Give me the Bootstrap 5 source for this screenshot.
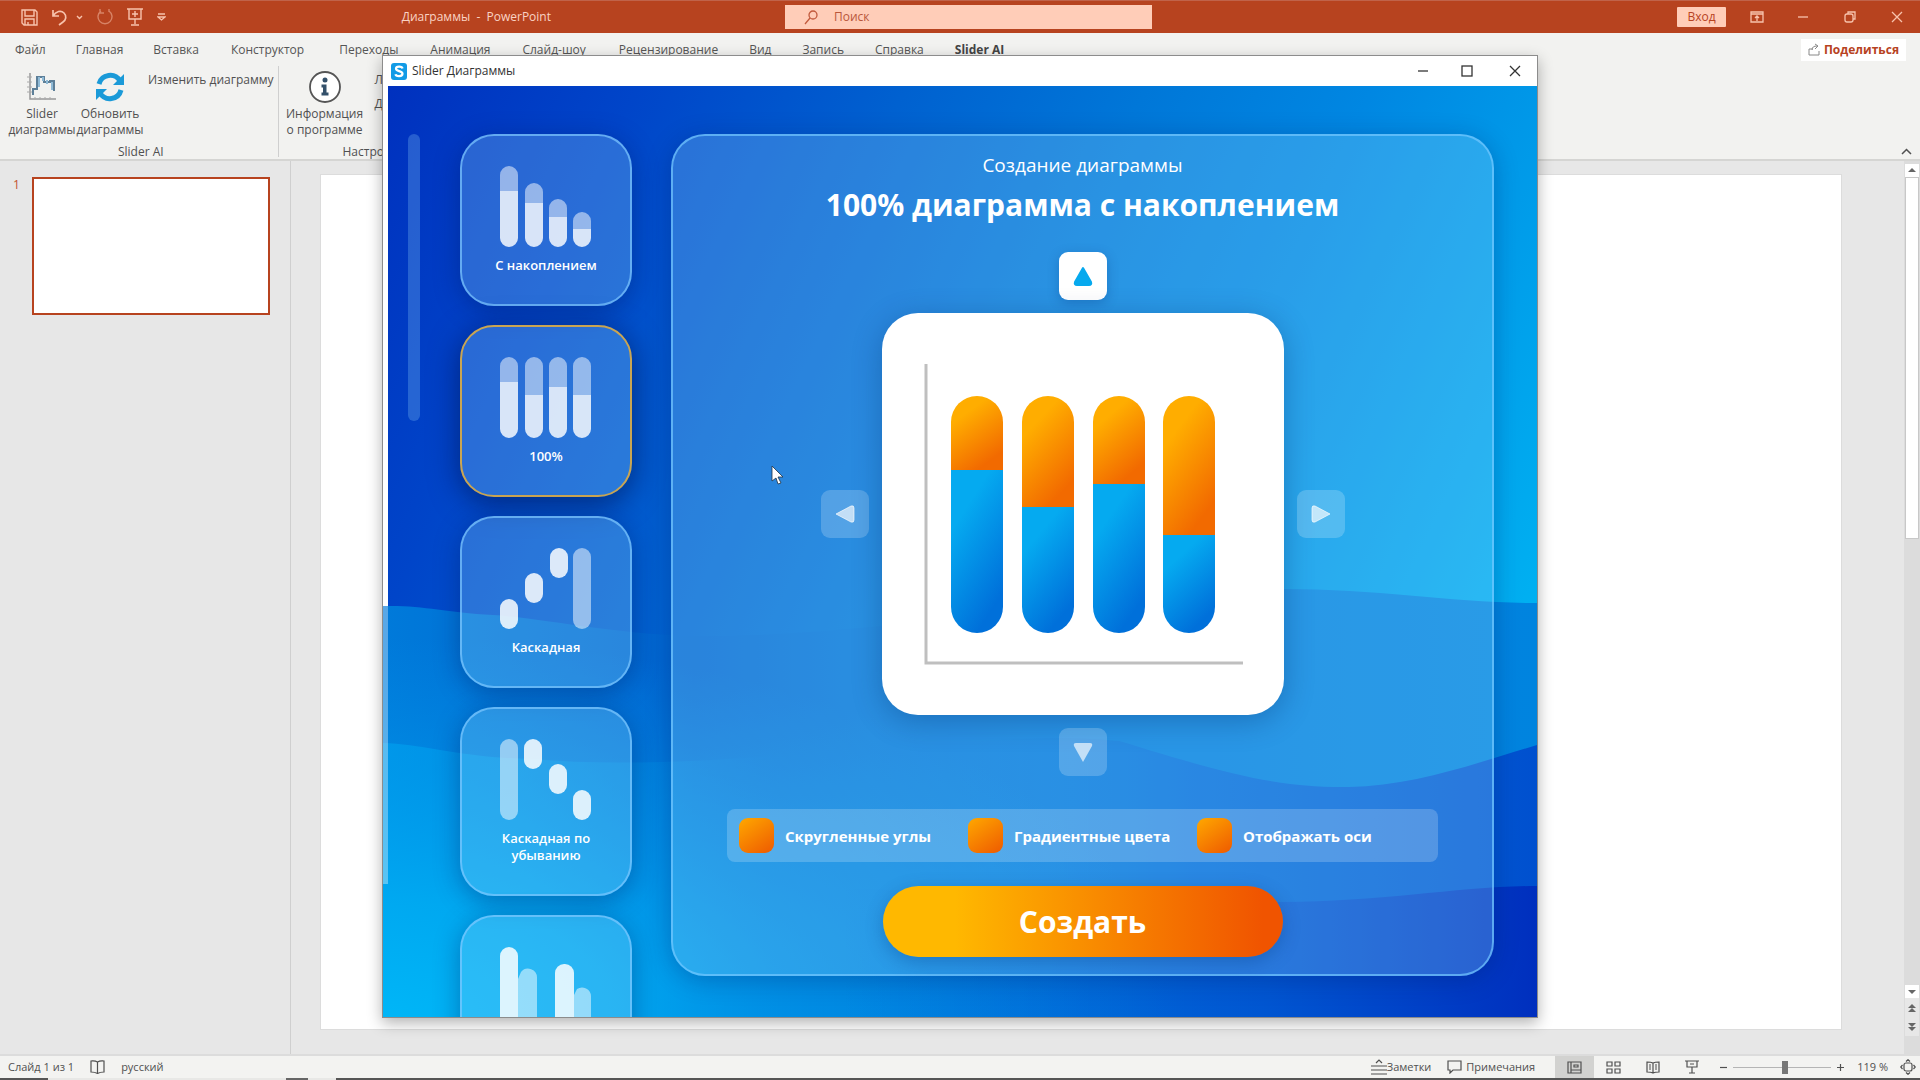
<!DOCTYPE html>
<html lang="ru">
<head>
<meta charset="utf-8">
<meta name="viewport" content="width=device-width, initial-scale=1">
<title>Диаграммы - PowerPoint</title>
<link rel="stylesheet" href="https://cdn.jsdelivr.net/npm/bootstrap@5.3.0/dist/css/bootstrap.min.css">
<style>
  body { font-family: "Open Sans", "Noto Sans", sans-serif; font-size: 12px; line-height: 16px; color: #505050; background: #e7e7e7; overflow: hidden; }
  button { font: inherit; color: inherit; background: none; border: 0; padding: 0; }
  svg { display: block; flex: none; }
  .ln { fill: none; stroke: currentColor; }
  .titlebar { height: 33px; background: #b7431f; color: #f8c3ad; border-top: 1px solid #c0634a; }
  .side-left { flex: 785 1 0; }
  .side-right { flex: 753 1 0; }
  .quick { gap: 14px; padding-left: 21px; }
  .doc-name { padding-right: 234px; color: #fad3c4; }
  .search-box { width: 367px; height: 24px; background: #ffcdb8; padding-left: 19px; gap: 16px; color: #c25a3c; }
  .search-box input { border: 0; background: none; color: #b9573b; outline: 0; padding: 0; }
  .search-box input::placeholder { color: #b9573b; opacity: 1; }
  .sign-in { width: 49px; height: 20px; background: #ffcdb8; color: #b7431f; border-radius: 1px; margin-right: -7px; }
  .win-tools { gap: 31px; padding-right: 15px; }
  .ribbon { height: 128px; background: #f2f2f0; border-bottom: 2px solid #d5d5d3; }
  .tabs-row { height: 33px; }
  .tabs-row a { color: #555; text-decoration: none; padding: 0 16px; }
  .tabs-row a:nth-child(-n+3) { padding: 0 15px; }
  .tabs-row a:nth-child(4) { padding: 0 19px 0 17px; }
  .tabs-row a:nth-child(n+8) { padding: 0 14px 0 17px; }
  .tabs-row a.current { font-weight: 700; color: #444; }
  .share-btn { background: #fff; color: #b7431f; font-weight: 700; height: 22px; padding: 0 7px; gap: 4px; margin-right: 14px; }
  .groups { flex: 1; }
  .tool-group { padding: 2px 4px 0 8px; border-right: 1px solid #cfcfcf; height: 91px; }
  .tool { display: flex; flex-direction: column; align-items: center; width: 68px; height: 76px; text-align: center; white-space: nowrap; }
  .tool.wide { width: 76px; margin-right: 12px; }
  .tool-pic { height: 38px; display: flex; align-items: center; }
  .workspace { flex: 1; min-height: 0; }
  .thumbs { width: 291px; border-right: 1px solid #cfcfcf; padding: 16px 0 0 13px; gap: 12px; color: #c2532f; }
  .thumb-slide { width: 238px; height: 138px; background: #fff; border: 2px solid #b7431f; }
  .canvas-area { padding: 13px 62px 26px 29px; }
  .slide-page { background: #fff; border: 1px solid #dcdcdc; }
  .vscroll { width: 16px; padding: 3px 1px 20px; background: #dcdcdc; }
  .vscroll button { background: #fff; height: 13px; display: flex; align-items: center; justify-content: center; }
  .vscroll-thumb { background: #fff; height: 362px; border: 1px solid #c8c8c8; }
  .vscroll .plain { background: #e7e7e7; height: 19px; }
  .statusbar { height: 22px; background: #f3f3f1; box-shadow: 0 -2px 0 #dcdcdc; font-size: 11px; }
  .bottom-edge { height: 2px; background: linear-gradient(90deg, #555 48px, #e8e8e6 48px 286px, #666 286px 308px, #e8e8e6 308px 336px, #555 336px); }
  .view-btn { width: 39px; height: 22px; display: flex; align-items: center; justify-content: center; }
  .view-btn.on { background: #d2d2d0; }
  .zoom-range { appearance: none; width: 98px; height: 14px; background: linear-gradient(#b5b5b5, #b5b5b5) center / 100% 1px no-repeat; margin: 0 5px; }
  .zoom-range::-webkit-slider-thumb { appearance: none; width: 6px; height: 13px; background: #777; border: 0; }

  .dialog-win { position: absolute; inset: 55px 382px 62px 382px; border: 1px solid #8c8c8c; box-shadow: 0 5px 14px rgba(0,0,0,.3); background: #fff; color: #333; }
  .dialog-bar { height: 30px; padding: 0 16px 0 8px; gap: 5px; }
  .dialog-body { flex: 1; min-height: 0; position: relative; overflow: hidden; padding: 0 46px 0 25px; color: #fff; }
  .waves { position: absolute; inset: 0; width: 100%; height: 100%; }
  .side-scroll { width: 12px; height: 287px; border-radius: 6px; background: rgba(160,225,255,.24); margin: 48px 40px 0 0; position: relative; }
  .kind-list { width: 172px; gap: 19px; padding-top: 48px; position: relative; }
  .kind { flex: none; min-height: 172px; padding: 30px 20px; gap: 10px; display: flex; flex-direction: column; align-items: center; border: 2px solid rgba(125,200,255,.7); border-radius: 34px; background: rgba(160,225,255,.26); box-shadow: 0 5px 26px rgba(0,20,90,.36); font-size: 13px; line-height: 17px; font-weight: 600; }
  .kind.picked { border-color: #c9a552; box-shadow: 0 6px 30px rgba(0,10,60,.55); }
  .maker { margin: 48px 0 41px 39px; padding: 17px 54px 17px; border: 2px solid rgba(115,200,255,.7); border-radius: 34px; background: rgba(160,225,255,.26); box-shadow: 0 4px 24px rgba(0,20,90,.28); position: relative; }
  .maker h2 { font-size: 19px; line-height: 24px; font-weight: 500; margin: 0; }
  .maker h1 { font-size: 30px; line-height: 48px; font-weight: 700; margin: 4px 0 0; }
  .arrow-btn { width: 48px; height: 48px; border-radius: 9px; background: rgba(255,255,255,.2); color: rgba(255,255,255,.65); display: flex; align-items: center; justify-content: center; }
  .arrow-btn.on { background: #fff; color: #06a9ee; box-shadow: 0 3px 12px rgba(0,40,110,.25); margin-top: 23px; }
  .preview-row { gap: 13px; margin: 13px 0; }
  .preview { width: 402px; height: 402px; background: #fff; border-radius: 36px; box-shadow: 0 6px 30px rgba(0,40,100,.32); }
  .option-bar { height: 53px; border-radius: 8px; background: rgba(255,255,255,.2); padding: 0 12px; font-size: 15px; line-height: 20px; font-weight: 700; }
  .opt { width: 229px; gap: 11px; white-space: nowrap; }
  .opt input { appearance: none; width: 35px; height: 35px; margin: 0; border-radius: 9px; background: linear-gradient(145deg, #ffa800, #ee5a00); }
  .create-btn { width: 400px; height: 71px; border-radius: 36px; background: linear-gradient(90deg, #ffb800 18%, #f05400 95%); color: #fff; font-size: 30px; line-height: 40px; font-weight: 700; box-shadow: 0 5px 18px rgba(0,50,120,.3); }
  .pointer { position: absolute; left: 771px; top: 465px; }
</style>
<script src="https://cdn.jsdelivr.net/npm/bootstrap@5.3.0/dist/js/bootstrap.bundle.min.js"></script>
</head>
<body class="d-flex flex-column vh-100 position-relative">

<header class="titlebar d-flex align-items-center flex-shrink-0">
  <div class="side-left d-flex align-items-center justify-content-between">
    <div class="quick d-flex align-items-center">
      <button aria-label="Сохранить"><svg width="17" height="17" viewBox="0 0 17 17" class="ln" stroke-width="1.4"><path d="M1 1h13l2 2v13H3l-2-2zM4 1v6h9V1M4 16v-6h9v6M7 16v-3"/></svg></button>
      <button class="d-flex align-items-center gap-2" aria-label="Отменить"><svg width="16" height="17" viewBox="0 0 16 17" class="ln" stroke-width="1.7"><path d="M1 1v6h6M1 7c3-5 8-6 11-3s2 7-1 9l-4 3"/></svg><svg width="7" height="5" viewBox="0 0 7 5" class="ln" stroke-width="1.4"><path d="M1 1l2.500 2.500L6 1"/></svg></button>
      <button class="opacity-50" aria-label="Повторить"><svg width="16" height="18" viewBox="0 0 16 18" class="ln" stroke-width="1.4"><path d="M4 3a7 7 0 1 0 8 0M3 1v4h4M12 1v3"/></svg></button>
      <button aria-label="С начала"><svg width="16" height="18" viewBox="0 0 16 18" class="ln" stroke-width="1.4"><path d="M0 1h16M2 1v10h12V1M8 11v5M4 17h8M8 3v6M5 6h6"/></svg></button>
      <button aria-label="Настройка панели"><svg width="9" height="9" viewBox="0 0 9 9" class="ln" stroke-width="1.3"><path d="M1 1h7M1 4h7L4.500 7z"/></svg></button>
    </div>
    <div class="doc-name">Диаграммы&nbsp; - &nbsp;PowerPoint</div>
  </div>
  <label class="search-box d-flex align-items-center">
    <svg width="14" height="15" viewBox="0 0 14 15" class="ln" stroke-width="1.3"><circle cx="9" cy="5" r="4"/><path d="M6 8l-5 6"/></svg>
    <input type="search" placeholder="Поиск" aria-label="Поиск">
  </label>
  <div class="side-right win-tools d-flex align-items-center justify-content-end">
    <button class="sign-in">Вход</button>
    <button aria-label="Параметры ленты"><svg width="14" height="12" viewBox="0 0 14 12" class="ln" stroke-width="1.3"><path d="M1 1h12v10H1zM1 3h12M7 10V5M5 7l2-2 2 2"/></svg></button>
    <button aria-label="Свернуть"><svg width="16" height="12" viewBox="0 0 16 12" class="ln" stroke-width="1.3"><path d="M3 6h10"/></svg></button>
    <button aria-label="Восстановить"><svg width="16" height="12" viewBox="0 0 16 12" class="ln" stroke-width="1.3"><rect x="3" y="3" width="8" height="8" rx="2"/><path d="M6 3V1h7v7h-2"/></svg></button>
    <button aria-label="Закрыть"><svg width="16" height="12" viewBox="0 0 16 12" class="ln" stroke-width="1.3"><path d="M3 1l10 10M13 1L3 11"/></svg></button>
  </div>
</header>

<section class="ribbon d-flex flex-column flex-shrink-0">
  <div class="tabs-row d-flex align-items-center justify-content-between">
    <nav class="d-flex">
      <a href="#">Файл</a><a href="#">Главная</a><a href="#">Вставка</a><a href="#">Конструктор</a><a href="#">Переходы</a><a href="#">Анимация</a><a href="#">Слайд-шоу</a><a href="#">Рецензирование</a><a href="#">Вид</a><a href="#">Запись</a><a href="#">Справка</a><a href="#" class="current">Slider AI</a>
    </nav>
    <button class="share-btn d-flex align-items-center"><svg width="12" height="13" viewBox="0 0 12 13" class="ln"><path stroke="#888" d="M5 6H1v6h10V8M4 7c0-3 2-4 5-4M7 1l3 2-3 3"/></svg>Поделиться</button>
  </div>
  <div class="groups d-flex">
    <div class="tool-group d-flex flex-column align-items-center">
      <div class="d-flex">
        <button class="tool"><span class="tool-pic"><svg width="30" height="30" viewBox="0 0 30 30" fill="none"><path d="M3 1v26h26" stroke="#999" stroke-width="1.500"/><path d="M0 5h5M0 10h5M0 15h5M0 20h5M8 25v3M13 25v3M18 25v3M23 25v3" stroke="#aaa"/><path d="M6 23v-6h4V5h7v5h6v-1h4v10" stroke="#5d7f98" stroke-width="2"/><path d="M12 5v10M16 5v4M20 8v4M25 10v8" stroke="#8fbad6" stroke-width="2"/></svg></span>Slider<br>диаграммы</button>
        <button class="tool me-1"><span class="tool-pic"><svg width="30" height="30" viewBox="0 0 30 30"><path d="M4 12A11.500 11.500 0 0 1 25 9" fill="none" stroke="#1b9ad8" stroke-width="5"/><path d="M29 2v11H18z" fill="#1b9ad8"/><path d="M26 18A11.500 11.500 0 0 1 5 21" fill="none" stroke="#1b9ad8" stroke-width="5"/><path d="M1 28V17h11z" fill="#1b9ad8"/></svg></span>Обновить<br>диаграммы</button>
        <button class="align-self-start pt-1 text-nowrap">Изменить диаграмму</button>
      </div>
      <div>Slider AI</div>
    </div>
    <div class="tool-group d-flex flex-column border-0">
      <div class="d-flex">
        <button class="tool wide"><span class="tool-pic"><svg width="34" height="34" viewBox="0 0 34 34"><circle cx="17" cy="17" r="15" fill="#fff" stroke="#555" stroke-width="1.800"/><circle cx="17" cy="10" r="2.500" fill="#33506a"/><path d="M13.500 14.500h5v8h2v3h-7v-3h1.500v-5h-1.500z" fill="#33506a"/></svg></span>Информация<br>о программе</button>
        <div class="d-flex flex-column gap-2 pt-1"><a href="#" class="text-reset text-decoration-none">Л</a><a href="#" class="text-reset text-decoration-none">Д</a></div>
      </div>
      <div class="ps-5 ms-2">Настро</div>
    </div>
    <button class="ms-auto align-self-end pb-1 me-2" aria-label="Свернуть ленту"><svg width="11" height="7" viewBox="0 0 11 7" class="ln" stroke-width="1.500"><path d="M1 6l4.500-4.500L10 6"/></svg></button>
  </div>
</section>

<main class="workspace d-flex">
  <aside class="thumbs d-flex align-items-start flex-shrink-0"><span>1</span><div class="thumb-slide"></div></aside>
  <section class="canvas-area flex-grow-1 d-flex"><div class="slide-page flex-grow-1"></div></section>
  <div class="vscroll d-flex flex-column">
    <button aria-label="Вверх"><svg width="8" height="5" viewBox="0 0 8 5"><path d="M0 4l4-4 4 4z" fill="#666"/></svg></button>
    <div class="vscroll-thumb"></div>
    <button class="mt-auto" aria-label="Вниз"><svg width="8" height="5" viewBox="0 0 8 5"><path d="M0 1l4 4 4-4z" fill="#666"/></svg></button>
    <button class="plain" aria-label="Предыдущий слайд"><svg width="8" height="8" viewBox="0 0 8 8"><path d="M0 4l4-4 4 4zM0 8l4-4 4 4z" fill="#666"/></svg></button>
    <button class="plain" aria-label="Следующий слайд"><svg width="8" height="8" viewBox="0 0 8 8"><path d="M0 0l4 4 4-4zM0 4l4 4 4-4z" fill="#666"/></svg></button>
  </div>
</main>

<footer class="statusbar d-flex align-items-center justify-content-between flex-shrink-0">
  <div class="d-flex align-items-center ps-2 gap-3">
    <span>Слайд 1 из 1</span>
    <svg width="15" height="14" viewBox="0 0 15 14" class="ln" stroke-width="1.200"><path d="M7.500 2C5 .5 3 1 1 1v11c2 0 4 0 6.500 1.500C10 12 12 12 14 12V1c-2 0-4-.5-6.500 1zv11"/></svg>
    <span>русский</span>
  </div>
  <div class="d-flex align-items-center pe-1">
    <button class="d-flex align-items-center me-3"><svg width="16" height="16" viewBox="0 0 16 16" class="ln" stroke-width="1.200"><path d="M0 7h16M0 11h16M0 15h16M5 4l3-3 3 3"/></svg>Заметки</button>
    <button class="d-flex align-items-center me-3 pe-1"><svg width="15" height="14" viewBox="0 0 15 14" class="ln me-1" stroke-width="1.200"><path d="M1 1h13v9H6l-3 3v-3H1z"/></svg>Примечания</button>
    <button class="view-btn on" aria-label="Обычный"><svg width="15" height="13" viewBox="0 0 15 13" class="ln" stroke-width="1.200"><path d="M1 1h13v11H1zM4 1v11M4 9h10M7 4h4v2H7z"/></svg></button>
    <button class="view-btn" aria-label="Сортировщик"><svg width="15" height="13" viewBox="0 0 15 13" class="ln" stroke-width="1.200"><path d="M1 1h5v4H1zM9 1h5v4H9zM1 8h5v4H1zM9 8h5v4H9z"/></svg></button>
    <button class="view-btn" aria-label="Чтение"><svg width="14" height="13" viewBox="0 0 14 13" class="ln" stroke-width="1.200"><path d="M7 2C5 1 3 1 1 1v10c2 0 4 0 6 1 2-1 4-1 6-1V1c-2 0-4 0-6 1zv10M3 4h2M3 6h2M3 8h2M9 4h2M9 6h2M9 8h2"/></svg></button>
    <button class="view-btn" aria-label="Показ слайдов"><svg width="14" height="14" viewBox="0 0 14 14" class="ln" stroke-width="1.200"><path d="M0 1h14M2 1v6h10V1M7 7v6M4 13h6M5 4h4"/></svg></button>
    <button class="ms-2" aria-label="Уменьшить"><svg width="9" height="9" viewBox="0 0 9 9" class="ln" stroke-width="1.200"><path d="M1 4.500h7"/></svg></button>
    <input class="zoom-range" type="range" min="10" max="210" value="117" aria-label="Масштаб">
    <button aria-label="Увеличить"><svg width="9" height="9" viewBox="0 0 9 9" class="ln" stroke-width="1.200"><path d="M1 4.500h7M4.500 1v7"/></svg></button>
    <span class="ps-2 ms-1 me-2 pe-1">119 %</span>
    <button aria-label="Вписать слайд"><svg width="16" height="16" viewBox="0 0 16 16" class="ln" stroke-width="1.200"><rect x="4" y="4" width="8" height="8" rx="2"/><path d="M6 2.500L8 .7l2 1.800M6 13.500l2 1.800 2-1.800M2.500 6L.7 8l1.800 2M13.500 6l1.800 2-1.800 2"/></svg></button>
  </div>
</footer>
<div class="bottom-edge flex-shrink-0"></div>

<section class="dialog-win d-flex flex-column" role="dialog" aria-label="Slider Диаграммы">
  <div class="dialog-bar d-flex align-items-center flex-shrink-0">
    <svg width="16" height="17" viewBox="0 0 16 17"><rect width="16" height="17" rx="3" fill="#129be6"/><path d="M11.500 5.500C11 3 5 3 5 5.800c0 2.700 6.500 2 6.500 5 0 3-6.500 3-7 .4" fill="none" stroke="#fff" stroke-width="2.200"/></svg>
    <span>Slider Диаграммы</span>
    <div class="ms-auto d-flex gap-4 align-items-center">
      <button class="px-1" aria-label="Свернуть"><svg width="12" height="12" viewBox="0 0 12 12" class="ln" stroke-width="1.300"><path d="M1 6h10"/></svg></button>
      <button class="ps-1 pe-2" aria-label="Развернуть"><svg width="12" height="12" viewBox="0 0 12 12" class="ln" stroke-width="1.300"><rect x="1" y="1" width="10" height="10"/></svg></button>
      <button class="ps-1" aria-label="Закрыть"><svg width="12" height="12" viewBox="0 0 12 12" class="ln" stroke-width="1.300"><path d="M1 1l10 10M11 1L1 11"/></svg></button>
    </div>
  </div>
  <div class="dialog-body d-flex align-items-stretch">
    <svg class="waves" viewBox="0 0 1155 931" preserveAspectRatio="none">
      <defs>
        <linearGradient id="w0" x1="0" y1="0" x2="1155" y2="550" gradientUnits="userSpaceOnUse"><stop offset="0" stop-color="#0030be"/><stop offset=".18" stop-color="#0045c9"/><stop offset=".37" stop-color="#0061d0"/><stop offset=".54" stop-color="#0077d8"/><stop offset=".7" stop-color="#0087e2"/><stop offset=".82" stop-color="#0098e8"/><stop offset="1" stop-color="#00b2f2"/></linearGradient>
        <linearGradient id="w1"><stop offset="0" stop-color="#007ada"/><stop offset=".27" stop-color="#0064d0"/><stop offset=".42" stop-color="#0072d6"/><stop offset=".6" stop-color="#007add"/><stop offset="1" stop-color="#0084df"/></linearGradient>
        <linearGradient id="w2"><stop offset="0" stop-color="#0098ea"/><stop offset=".12" stop-color="#008fe4" stop-opacity=".9"/><stop offset=".34" stop-color="#0080dc" stop-opacity="0"/><stop offset=".5" stop-color="#0070d8" stop-opacity="0"/><stop offset=".7" stop-color="#0066d8" stop-opacity=".85"/><stop offset="1" stop-color="#0050cf"/></linearGradient>
        <linearGradient id="w3" x1="460" y1="0" x2="1155" y2="0" gradientUnits="userSpaceOnUse"><stop offset="0" stop-color="#0060d6" stop-opacity="0"/><stop offset=".6" stop-color="#0050cf" stop-opacity=".7"/><stop offset="1" stop-color="#002fbe"/></linearGradient>
        <radialGradient id="glow" cx="0" cy="931" r="1" gradientUnits="userSpaceOnUse" gradientTransform="translate(0 931) scale(800 380) translate(0 -931)"><stop offset="0" stop-color="#00b6f7"/><stop offset=".3" stop-color="#00acf2" stop-opacity=".85"/><stop offset=".65" stop-color="#0098ea" stop-opacity=".5"/><stop offset="1" stop-color="#0090e6" stop-opacity="0"/></radialGradient>
      </defs>
      <rect width="1155" height="931" fill="url(#w0)"/>
      <path d="M0 520C40 519 60 526 110 529S240 550 320 550C520 550 720 503 900 503C1000 503 1070 517 1155 517V931H0z" fill="url(#w1)"/>
      <path d="M0 657C40 658 80 672 150 673C330 690 600 640 737 655C850 690 900 702 967 701S1100 675 1155 659V931H0z" fill="url(#w2)"/>
      <rect y="520" width="1155" height="411" fill="url(#glow)"/>
      <path d="M450 803C600 803 800 816 900 816S1080 800 1155 800V931H450z" fill="url(#w3)"/>
      <rect width="5" height="520" fill="#fff"/><rect y="520" width="5" height="278" fill="#fff" opacity=".35"/>
    </svg>
    <div class="side-scroll flex-shrink-0"></div>
    <div class="kind-list d-flex flex-column flex-shrink-0">
      <button class="kind"><svg width="92" height="81" viewBox="0 0 92 81">
        <g fill="#fff" fill-opacity=".5"><path d="M0 25V9a9 9 0 0 1 18 0v16zM25 37V26a9 9 0 0 1 18 0v11zM49 51V42a9 9 0 0 1 18 0v9zM73 63V55a9 9 0 0 1 18 0v8z"/></g>
        <g fill="#fff" fill-opacity=".82"><path d="M0 25v47a9 9 0 0 0 18 0V25zM25 37v35a9 9 0 0 0 18 0V37zM49 51v21a9 9 0 0 0 18 0V51zM73 63v9a9 9 0 0 0 18 0v-9z"/></g></svg><span>С накоплением</span></button>
      <button class="kind picked"><svg width="92" height="81" viewBox="0 0 92 81">
        <g fill="#fff" fill-opacity=".5"><path d="M0 25V9a9 9 0 0 1 18 0v16zM25 38V9a9 9 0 0 1 18 0v29zM49 30V9a9 9 0 0 1 18 0v21zM73 38V9a9 9 0 0 1 18 0v29z"/></g>
        <g fill="#fff" fill-opacity=".82"><path d="M0 25v47a9 9 0 0 0 18 0V25zM25 38v34a9 9 0 0 0 18 0V38zM49 30v42a9 9 0 0 0 18 0V30zM73 38v34a9 9 0 0 0 18 0V38z"/></g></svg><span>100%</span></button>
      <button class="kind"><svg width="92" height="81" viewBox="0 0 92 81" fill="#fff"><g fill-opacity=".84"><rect y="51" width="18" height="30" rx="9"/><rect x="25" y="25" width="18" height="30" rx="9"/><rect x="50" width="18" height="30" rx="9"/></g><rect x="73" width="18" height="81" rx="9" fill-opacity=".5"/></svg><span>Каскадная</span></button>
      <button class="kind"><svg width="92" height="81" viewBox="0 0 92 81" fill="#fff"><g fill-opacity=".84"><rect x="24" width="18" height="30" rx="9"/><rect x="49" y="25" width="18" height="30" rx="9"/><rect x="73" y="51" width="18" height="30" rx="9"/></g><rect width="18" height="81" rx="9" fill-opacity=".5"/></svg><span>Каскадная по убыванию</span></button>
      <button class="kind" aria-label="Гистограмма"><svg width="92" height="81" viewBox="0 0 92 81" fill="#fff"><path d="M18 81V32l3-7a9 9 0 0 1 16 6v50zM74 81V48l3-6a9 9 0 0 1 14 7v32z" fill-opacity=".5"/><g fill-opacity=".84"><rect width="18" height="91" rx="9"/><rect x="55" y="17" width="19" height="81" rx="9"/></g></svg></button>
    </div>
    <div class="maker flex-grow-1 d-flex flex-column align-items-center">
      <h2>Создание диаграммы</h2>
      <h1>100% диаграмма с накоплением</h1>
      <button class="arrow-btn on" aria-label="Вверх"><svg width="24" height="24" viewBox="0 0 24 24"><path d="M12 4l8 14q1 3-2 3H6q-3 0-2-3z" fill="currentColor" stroke="currentColor" stroke-width="2" stroke-linejoin="round"/></svg></button>
      <div class="preview-row d-flex align-items-center">
        <button class="arrow-btn" aria-label="Влево"><svg width="24" height="24" viewBox="0 0 24 24"><path d="M3 12l15-8q3-1 3 2v12q0 3-3 2z" fill="currentColor" stroke="currentColor" stroke-linejoin="round"/></svg></button>
        <div class="preview"><svg width="402" height="402" viewBox="0 0 402 402">
          <defs>
            <linearGradient id="or" x1="0" y1="0" x2=".5" y2="1"><stop offset=".3" stop-color="#ffad00"/><stop offset="1" stop-color="#f26a00"/></linearGradient>
            <linearGradient id="bl" x1="0" y1="0" x2=".5" y2="1"><stop offset=".3" stop-color="#05aaf0"/><stop offset="1" stop-color="#0070da"/></linearGradient>
          </defs>
          <path d="M44 51v299h317" fill="none" stroke="#bfbfbf" stroke-width="3"/>
          <g fill="url(#or)"><path d="M69 157v-48a26 26 0 0 1 52 0v48z"/><path d="M140 194v-85a26 26 0 0 1 52 0v85z"/><path d="M211 171v-62a26 26 0 0 1 52 0v62z"/><path d="M281 222V109a26 26 0 0 1 52 0v113z"/></g>
          <g fill="url(#bl)"><path d="M69 157v137a26 26 0 0 0 52 0V157z"/><path d="M140 194v100a26 26 0 0 0 52 0V194z"/><path d="M211 171v123a26 26 0 0 0 52 0V171z"/><path d="M281 222v72a26 26 0 0 0 52 0v-72z"/></g>
        </svg></div>
        <button class="arrow-btn" aria-label="Вправо"><svg width="24" height="24" viewBox="0 0 24 24"><path d="M21 12L6 4Q3 3 3 6v12q0 3 3 2z" fill="currentColor" stroke="currentColor" stroke-linejoin="round"/></svg></button>
      </div>
      <button class="arrow-btn" aria-label="Вниз"><svg width="24" height="24" viewBox="0 0 24 24"><path d="M12 22L3 6Q2 3 5 3h14q3 0 2 3z" fill="currentColor"/></svg></button>
      <div class="option-bar d-flex align-items-center align-self-stretch mt-auto mb-4">
        <label class="opt d-flex align-items-center"><input type="checkbox" checked>Скругленные углы</label>
        <label class="opt d-flex align-items-center"><input type="checkbox" checked>Градиентные цвета</label>
        <label class="opt d-flex align-items-center"><input type="checkbox" checked>Отображать оси</label>
      </div>
      <button class="create-btn">Создать</button>
    </div>
  </div>
</section>

<svg class="pointer" width="13" height="20" viewBox="0 0 13 20"><path d="M1 1v15l4-3 2 6 3-1-3-6h5z" fill="#fff" stroke="#234" stroke-width=".8"/></svg>
</body>
</html>
